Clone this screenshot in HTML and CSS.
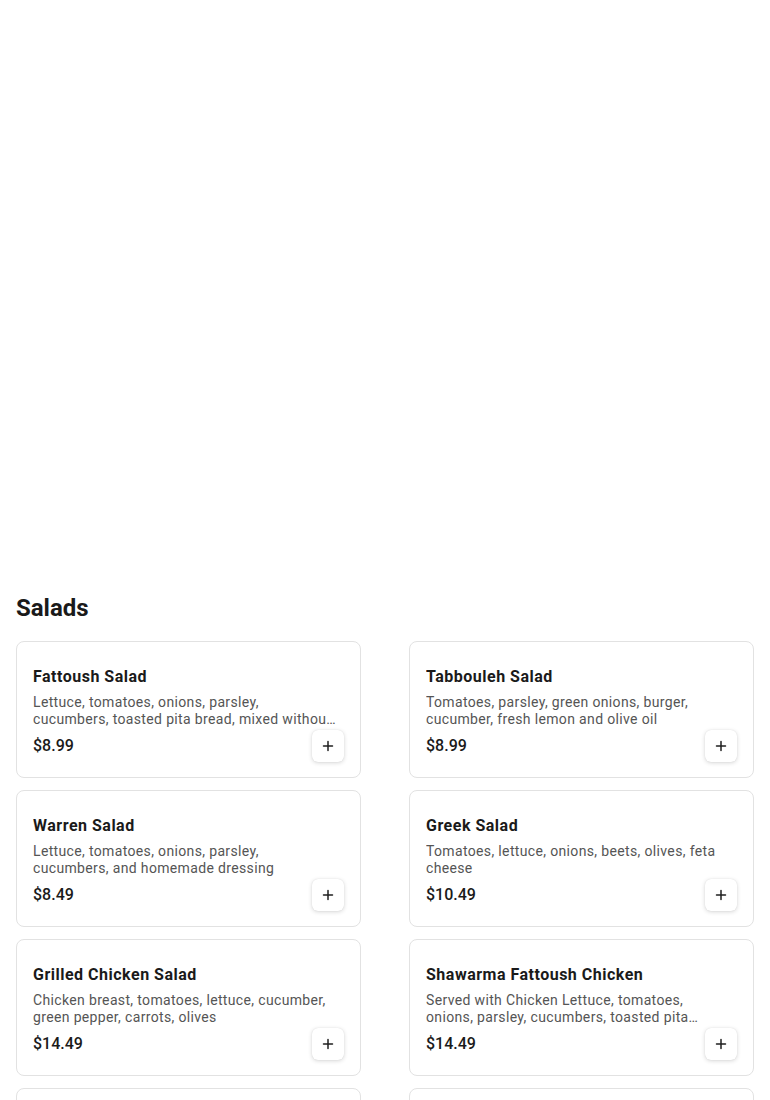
FILE: index.html
```
<!DOCTYPE html>
<html lang="en">
<head>
<meta charset="utf-8">
<title>Salads</title>
<link rel="stylesheet" href="styles.css">
</head>
<body>
<div class="hero"></div>
<section class="menu-section">
  <h2 class="section-title">Salads</h2>
  <div class="grid">
    <div class="card">
      <div class="card-title">Fattoush Salad</div>
      <div class="card-desc">Lettuce, tomatoes, onions, parsley, cucumbers, toasted pita bread, mixed without dressing and homemade pomegranate dressing</div>
      <div class="card-row">
        <span class="price">$8.99</span>
        <button class="add-btn" aria-label="Add"><svg viewBox="0 0 12 12" width="12" height="12"><path d="M6 1.5v9M1.5 6h9" stroke="#1f1f1f" stroke-width="1.5" stroke-linecap="round"/></svg></button>
      </div>
    </div>
    <div class="card">
      <div class="card-title">Tabbouleh Salad</div>
      <div class="card-desc">Tomatoes, parsley, green onions, burger, cucumber, fresh lemon and olive oil</div>
      <div class="card-row">
        <span class="price">$8.99</span>
        <button class="add-btn" aria-label="Add"><svg viewBox="0 0 12 12" width="12" height="12"><path d="M6 1.5v9M1.5 6h9" stroke="#1f1f1f" stroke-width="1.5" stroke-linecap="round"/></svg></button>
      </div>
    </div>
    <div class="card">
      <div class="card-title">Warren Salad</div>
      <div class="card-desc">Lettuce, tomatoes, onions, parsley, cucumbers, and homemade dressing</div>
      <div class="card-row">
        <span class="price">$8.49</span>
        <button class="add-btn" aria-label="Add"><svg viewBox="0 0 12 12" width="12" height="12"><path d="M6 1.5v9M1.5 6h9" stroke="#1f1f1f" stroke-width="1.5" stroke-linecap="round"/></svg></button>
      </div>
    </div>
    <div class="card">
      <div class="card-title">Greek Salad</div>
      <div class="card-desc">Tomatoes, lettuce, onions, beets, olives, feta cheese</div>
      <div class="card-row">
        <span class="price">$10.49</span>
        <button class="add-btn" aria-label="Add"><svg viewBox="0 0 12 12" width="12" height="12"><path d="M6 1.5v9M1.5 6h9" stroke="#1f1f1f" stroke-width="1.5" stroke-linecap="round"/></svg></button>
      </div>
    </div>
    <div class="card">
      <div class="card-title">Grilled Chicken Salad</div>
      <div class="card-desc">Chicken breast, tomatoes, lettuce, cucumber, green pepper, carrots, olives</div>
      <div class="card-row">
        <span class="price">$14.49</span>
        <button class="add-btn" aria-label="Add"><svg viewBox="0 0 12 12" width="12" height="12"><path d="M6 1.5v9M1.5 6h9" stroke="#1f1f1f" stroke-width="1.5" stroke-linecap="round"/></svg></button>
      </div>
    </div>
    <div class="card">
      <div class="card-title">Shawarma Fattoush Chicken</div>
      <div class="card-desc">Served with Chicken Lettuce, tomatoes, onions, parsley, cucumbers, toasted pita bread and homemade dressing</div>
      <div class="card-row">
        <span class="price">$14.49</span>
        <button class="add-btn" aria-label="Add"><svg viewBox="0 0 12 12" width="12" height="12"><path d="M6 1.5v9M1.5 6h9" stroke="#1f1f1f" stroke-width="1.5" stroke-linecap="round"/></svg></button>
      </div>
    </div>
    <div class="card">
      <div class="card-title">Shawarma Fattoush Beef</div>
      <div class="card-desc">Served with Beef Lettuce, tomatoes, onions, parsley, cucumbers, toasted pita bread and homemade dressing</div>
      <div class="card-row">
        <span class="price">$15.49</span>
        <button class="add-btn" aria-label="Add"><svg viewBox="0 0 12 12" width="12" height="12"><path d="M6 1.5v9M1.5 6h9" stroke="#1f1f1f" stroke-width="1.5" stroke-linecap="round"/></svg></button>
      </div>
    </div>
    <div class="card">
      <div class="card-title">Chicken Caesar Salad</div>
      <div class="card-desc">Grilled chicken, romaine lettuce, croutons, parmesan cheese and caesar dressing</div>
      <div class="card-row">
        <span class="price">$13.99</span>
        <button class="add-btn" aria-label="Add"><svg viewBox="0 0 12 12" width="12" height="12"><path d="M6 1.5v9M1.5 6h9" stroke="#1f1f1f" stroke-width="1.5" stroke-linecap="round"/></svg></button>
      </div>
    </div>
  </div>
</section>
</body>
</html>
```
FILE: styles.css
```
* { box-sizing: border-box; }
html, body { margin: 0; padding: 0; background: #ffffff; }
body {
  font-family: Roboto, "Liberation Sans", Arial, sans-serif;
  color: #1a1a1a;
}
.hero { height: 592px; }
.menu-section { padding: 0 16px; }
.section-title {
  margin: 0 0 17px 0;
  font-size: 24px;
  line-height: 32px;
  font-weight: 700;
  color: #1a1a1a;
}
.grid {
  display: grid;
  grid-template-columns: 1fr 1fr;
  column-gap: 48px;
  row-gap: 12px;
}
.card {
  border: 1px solid #e2e2e2;
  border-radius: 8px;
  padding: 25px 16px 15px 16px;
  background: #fff;
  height: 137px;
}
.card-title {
  font-size: 16px;
  line-height: 20px;
  font-weight: 700;
  letter-spacing: 0.5px;
  color: #1a1a1a;
  margin-bottom: 7px;
  white-space: nowrap;
  overflow: hidden;
  text-overflow: ellipsis;
}
.card-desc {
  font-size: 14px;
  line-height: 17px;
  letter-spacing: 0.35px;
  color: #555555;
  height: 34px;
  padding-right: 8px;
  display: -webkit-box;
  -webkit-line-clamp: 2;
  -webkit-box-orient: vertical;
  overflow: hidden;
}
.card-row {
  margin-top: 2px;
  display: flex;
  justify-content: space-between;
  align-items: center;
  height: 32px;
}
.price {
  font-size: 16px;
  line-height: 20px;
  font-weight: 500;
  color: #1a1a1a;
}
.add-btn {
  width: 32px;
  height: 32px;
  border: none;
  border-radius: 6px;
  background: #fff;
  box-shadow: 0 1px 4px rgba(0,0,0,0.16), 0 0 1px rgba(0,0,0,0.12);
  display: flex;
  align-items: center;
  justify-content: center;
  padding: 0;
  cursor: pointer;
}
.add-btn svg { display: block; }
```
